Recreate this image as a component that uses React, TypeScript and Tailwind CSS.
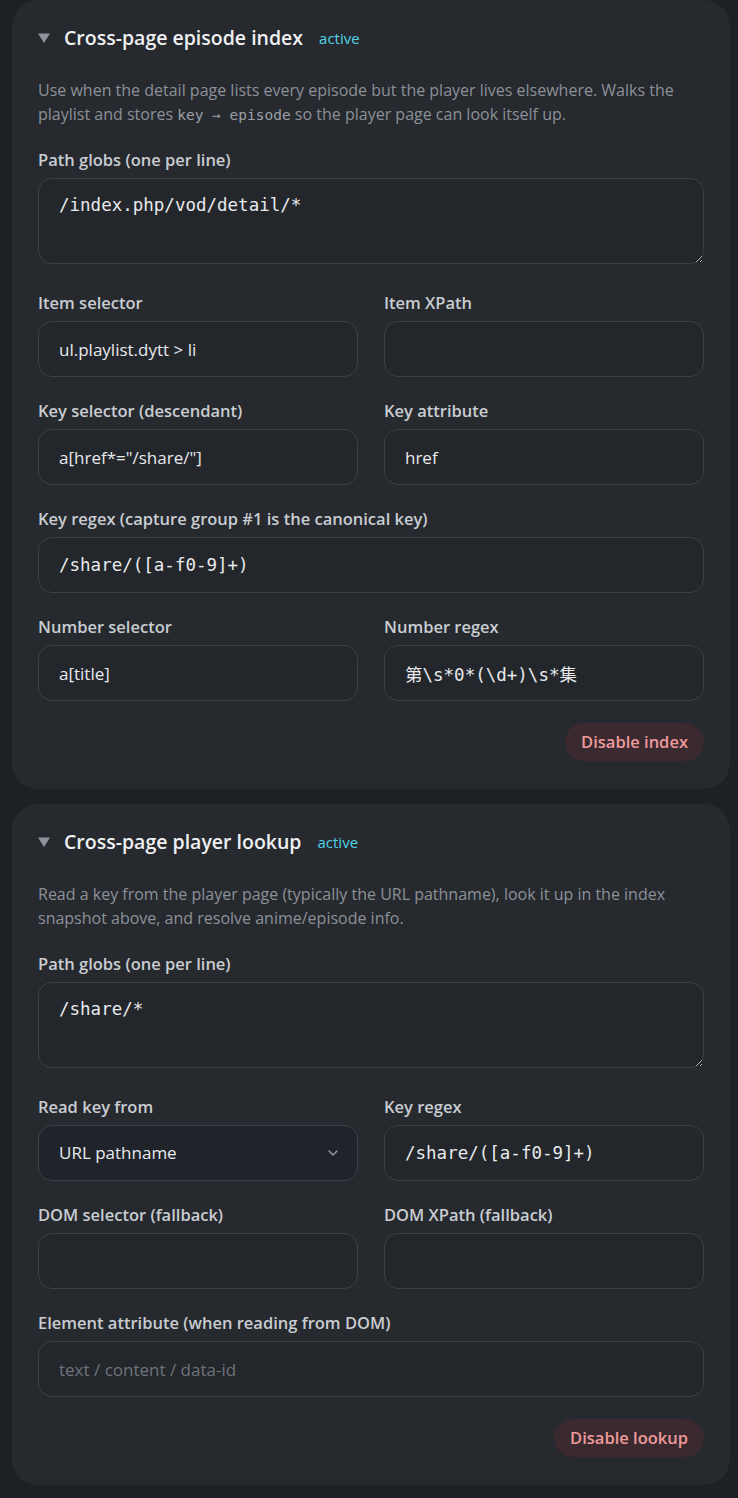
import { ChevronDown } from "lucide-react";

const SANS = "font-['Open_Sans','Noto_Sans',sans-serif]";
const MONO = "font-['DejaVu_Sans_Mono','Noto_Sans_CJK_SC',monospace]";

function Label({ text }: { text: string }) {
  return (
    <div className="text-[16.5px] leading-5 font-semibold text-[#c9cdd2] mb-2">
      {text}
    </div>
  );
}

function Input({
  value,
  placeholder,
  mono,
}: {
  value?: string;
  placeholder?: string;
  mono?: boolean;
}) {
  return (
    <input
      readOnly
      value={value ?? ""}
      placeholder={placeholder}
      className={`block w-full h-[56px] rounded-[14px] border border-[#3c4047] bg-[#23262b] px-5 text-[#e8eaed] placeholder:text-[#6f747b] outline-none ${
        mono ? MONO + " text-[17.5px]" : "text-[17px]"
      }`}
    />
  );
}

function Field({
  label,
  value,
  placeholder,
  mono,
}: {
  label: string;
  value?: string;
  placeholder?: string;
  mono?: boolean;
}) {
  return (
    <div>
      <Label text={label} />
      <Input value={value} placeholder={placeholder} mono={mono} />
    </div>
  );
}

function Globs({ value }: { value: string }) {
  return (
    <div className="pb-[5px]">
      <Label text="Path globs (one per line)" />
      <textarea
        readOnly
        value={value}
        className={`block w-full h-[86px] rounded-[14px] border border-[#3c4047] bg-[#23262b] px-5 py-[14px] text-[17.5px] leading-6 text-[#e8eaed] outline-none resize-y ${MONO}`}
      />
    </div>
  );
}

function Header({ title }: { title: string }) {
  return (
    <div className="flex items-center h-7">
      <svg width="12" height="10" viewBox="0 0 12 10" className="mr-[14px]">
        <path d="M0 0.5 L12 0.5 L6 10 Z" fill="#8e9399" />
      </svg>
      <span className="text-[19.5px] font-semibold text-[#eef0f2]">{title}</span>
      <span className="ml-4 text-[15px] text-[#4fd3e6]">active</span>
    </div>
  );
}

function DangerButton({ text }: { text: string }) {
  return (
    <div className="flex justify-end mt-[22px]">
      <button className="h-[38px] rounded-full bg-[#3a2a2f] px-4 text-[16.5px] font-semibold text-[#ee9a9c]">
        {text}
      </button>
    </div>
  );
}

function Code({ children }: { children: string }) {
  return (
    <code className={`${MONO} text-[14.5px] leading-none text-[#9aa0a6]`}>{children}</code>
  );
}

export default function App() {
  return (
    <div className={`min-h-screen bg-[#1d2025] pl-3 pr-2 pb-[14px] ${SANS}`}>
      <section className="rounded-[26px] bg-[#26292e] px-[26px] pt-6 pb-7">
        <Header title="Cross-page episode index" />
        <p className="mt-[26px] text-[16px] leading-6 text-[#8c9198]">
          Use when the detail page lists every episode but the player lives elsewhere. Walks the
          playlist and stores <Code>key → episode</Code> so the player page can look itself up.
        </p>
        <div className="mt-6 flex flex-col gap-6">
          <Globs value="/index.php/vod/detail/*" />
          <div className="grid grid-cols-2 gap-x-[26px]">
            <Field label="Item selector" value="ul.playlist.dytt > li" />
            <Field label="Item XPath" />
          </div>
          <div className="grid grid-cols-2 gap-x-[26px]">
            <Field label="Key selector (descendant)" value={'a[href*="/share/"]'} />
            <Field label="Key attribute" value="href" />
          </div>
          <Field
            label="Key regex (capture group #1 is the canonical key)"
            value="/share/([a-f0-9]+)"
            mono
          />
          <div className="grid grid-cols-2 gap-x-[26px]">
            <Field label="Number selector" value="a[title]" />
            <Field label="Number regex" value={"第\\s*0*(\\d+)\\s*集"} mono />
          </div>
        </div>
        <DangerButton text="Disable index" />
      </section>

      <section className="mt-[15px] rounded-[26px] bg-[#26292e] px-[26px] pt-6 pb-7">
        <Header title="Cross-page player lookup" />
        <p className="mt-[26px] text-[16px] leading-6 text-[#8c9198]">
          Read a key from the player page (typically the URL pathname), look it up in the index
          snapshot above, and resolve anime/episode info.
        </p>
        <div className="mt-6 flex flex-col gap-6">
          <Globs value="/share/*" />
          <div className="grid grid-cols-2 gap-x-[26px]">
            <div>
              <Label text="Read key from" />
              <div className="flex items-center justify-between h-[56px] rounded-[14px] border border-[#3c4047] bg-[#20242a] pl-5 pr-4 text-[17px] text-[#e8eaed]">
                <span>URL pathname</span>
                <ChevronDown size={16} strokeWidth={2} className="text-[#9aa0a6]" />
              </div>
            </div>
            <Field label="Key regex" value="/share/([a-f0-9]+)" mono />
          </div>
          <div className="grid grid-cols-2 gap-x-[26px]">
            <Field label="DOM selector (fallback)" />
            <Field label="DOM XPath (fallback)" />
          </div>
          <Field
            label="Element attribute (when reading from DOM)"
            placeholder="text / content / data-id"
          />
        </div>
        <DangerButton text="Disable lookup" />
      </section>
    </div>
  );
}
